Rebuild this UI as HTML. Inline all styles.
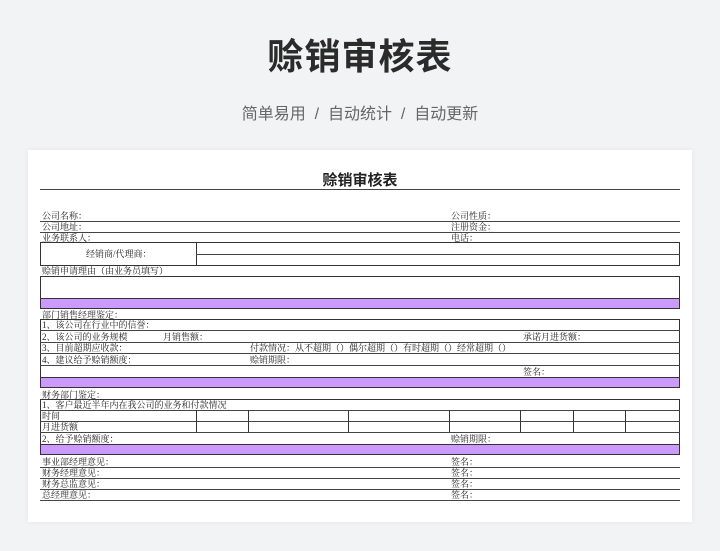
<!DOCTYPE html>
<html><head><meta charset="utf-8"><style>
*{margin:0;padding:0;box-sizing:border-box}
body{width:720px;height:551px;background:#f2f3f5;position:relative;overflow:hidden;font-family:"Liberation Sans","Noto Sans CJK SC",sans-serif}
.h1{position:absolute;top:28px;left:0;width:720px;text-align:center;font-size:36px;font-weight:bold;color:#2b2b2b;letter-spacing:1px}
.sub{position:absolute;top:100px;left:0;width:720px;text-align:center;font-size:16px;color:#666}
.card{position:absolute;left:28px;top:150px;width:664px;height:372px;background:#fff;box-shadow:0 0 6px rgba(0,0,0,.06)}
.a{position:absolute;font-family:"Liberation Serif","Noto Serif CJK SC",serif;font-size:9px;line-height:10px;color:#222;white-space:nowrap}
.l{position:absolute;height:0;border-top:1.3px solid #444}
.v{position:absolute;width:0;border-left:1px solid #333}
.b{position:absolute;border:1.2px solid #333}
.p{position:absolute;background:#cc99ff;border:1.2px solid #333}
</style></head><body>
<div class="h1">赊销审核表</div>
<div class="sub">简单易用 &nbsp;/&nbsp; 自动统计 &nbsp;/&nbsp; 自动更新</div>
<div class="card"></div>
<div class="a" style="left:0;width:720px;text-align:center;top:173px;font-size:15px;line-height:16px;font-weight:bold;font-family:'Liberation Sans','Noto Sans CJK SC',sans-serif">赊销审核表</div>
<div class="l" style="left:40px;width:640px;top:189px"></div>

<div class="a" style="left:42px;top:211px">公司名称：</div><div class="a" style="left:451px;top:211px">公司性质：</div>
<div class="l" style="left:40px;width:640px;top:221px"></div>
<div class="a" style="left:42px;top:222px">公司地址：</div><div class="a" style="left:451px;top:222px">注册资金：</div>
<div class="l" style="left:40px;width:640px;top:232px"></div>
<div class="a" style="left:42px;top:233px">业务联系人：</div><div class="a" style="left:451px;top:233px">电话：</div>
<div class="b" style="left:40px;top:242px;width:640px;height:24px"></div>
<div class="v" style="left:196px;top:242px;height:24px"></div>
<div class="l" style="left:196px;width:484px;top:254px;border-top-width:1px"></div>
<div class="a" style="left:86px;top:249px">经销商/代理商：</div>

<div class="a" style="left:42px;top:266px">赊销申请理由（由业务员填写）</div>
<div class="b" style="left:40px;top:276px;width:640px;height:23px"></div>
<div class="p" style="left:40px;top:298px;width:640px;height:11px"></div>

<div class="a" style="left:42px;top:310px">部门销售经理鉴定：</div>
<div class="b" style="left:40px;top:319px;width:640px;height:59px"></div>
<div class="l" style="left:40px;width:640px;top:330px;border-top-width:1px"></div>
<div class="l" style="left:40px;width:640px;top:342px;border-top-width:1px"></div>
<div class="l" style="left:40px;width:640px;top:353px;border-top-width:1px"></div>
<div class="l" style="left:40px;width:640px;top:365px;border-top-width:1px"></div>
<div class="a" style="left:42px;top:320px">1、该公司在行业中的信誉：</div>
<div class="a" style="left:42px;top:332px">2、该公司的业务规模</div><div class="a" style="left:163px;top:332px">月销售额：</div><div class="a" style="left:523px;top:332px">承诺月进货额：</div>
<div class="a" style="left:42px;top:343px">3、目前超期应收款：</div><div class="a" style="left:250px;top:343px">付款情况：从不超期（）偶尔超期（）有时超期（）经常超期（）</div>
<div class="a" style="left:42px;top:355px">4、建议给予赊销额度：</div><div class="a" style="left:250px;top:355px">赊销期限：</div>
<div class="a" style="left:523px;top:367px">签名：</div>
<div class="p" style="left:40px;top:377px;width:640px;height:11px"></div>

<div class="a" style="left:42px;top:390px">财务部门鉴定：</div>
<div class="b" style="left:40px;top:399px;width:640px;height:46px"></div>
<div class="l" style="left:40px;width:640px;top:410px;border-top-width:1px"></div>
<div class="l" style="left:40px;width:640px;top:421px;border-top-width:1px"></div>
<div class="l" style="left:40px;width:640px;top:432px;border-top-width:1px"></div>
<div class="v" style="left:196px;top:410px;height:22px"></div>
<div class="v" style="left:248px;top:410px;height:22px"></div>
<div class="v" style="left:348px;top:410px;height:22px"></div>
<div class="v" style="left:449px;top:410px;height:22px"></div>
<div class="v" style="left:520px;top:410px;height:22px"></div>
<div class="v" style="left:573px;top:410px;height:22px"></div>
<div class="v" style="left:625px;top:410px;height:22px"></div>
<div class="a" style="left:42px;top:400px">1、客户最近半年内在我公司的业务和付款情况</div>
<div class="a" style="left:42px;top:411px">时间</div>
<div class="a" style="left:42px;top:422px">月进货额</div>
<div class="a" style="left:42px;top:434px">2、给予赊销额度：</div><div class="a" style="left:451px;top:434px">赊销期限：</div>
<div class="p" style="left:40px;top:444px;width:640px;height:11px"></div>

<div class="a" style="left:42px;top:457px">事业部经理意见：</div><div class="a" style="left:451px;top:457px">签名：</div>
<div class="l" style="left:40px;width:640px;top:467px"></div>
<div class="a" style="left:42px;top:468px">财务经理意见：</div><div class="a" style="left:451px;top:468px">签名：</div>
<div class="l" style="left:40px;width:640px;top:478px"></div>
<div class="a" style="left:42px;top:479px">财务总监意见：</div><div class="a" style="left:451px;top:479px">签名：</div>
<div class="l" style="left:40px;width:640px;top:489px"></div>
<div class="a" style="left:42px;top:490px">总经理意见：</div><div class="a" style="left:451px;top:490px">签名：</div>
<div class="l" style="left:40px;width:640px;top:500px"></div>
</body></html>
